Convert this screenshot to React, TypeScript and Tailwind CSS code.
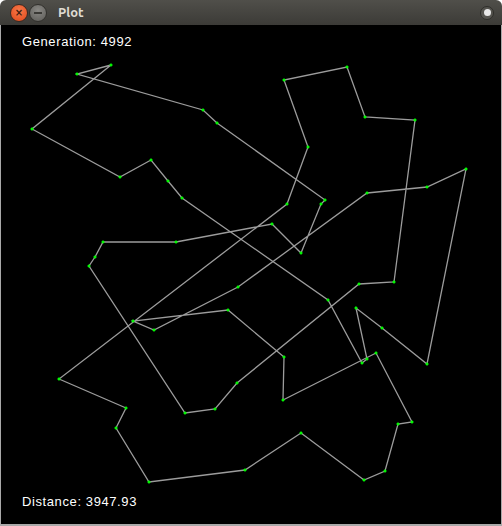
const tour: [number, number][] = [
  [59, 379], [126, 408], [116, 428], [149, 482], [245, 470], [301, 433],
  [364, 480], [385, 471], [398, 424], [412, 422], [376, 353], [283, 400],
  [284, 357], [228, 310], [133, 321], [154, 330], [238, 287], [367, 193],
  [427, 187], [466, 169], [427, 364], [382, 328], [356, 308], [367, 359],
  [362, 363], [328, 300], [182, 198], [168, 181], [151, 160], [120, 177],
  [32, 129], [111, 65], [77, 74], [203, 110], [217, 123], [325, 200],
  [321, 204], [301, 253], [272, 224], [176, 242], [103, 242], [95, 257],
  [89, 266], [185, 413], [215, 409], [237, 383], [359, 284], [394, 282],
  [415, 120], [365, 117], [347, 67], [284, 80], [308, 147], [287, 204],
];

const TitleBar = () => (
  <div className="h-[25px] flex items-center rounded-t-[6px] bg-gradient-to-b from-[#504f4a] to-[#3c3b37] px-[10px]">
    <div className="w-[18px] h-[18px] rounded-full bg-[radial-gradient(circle_at_50%_35%,#f7794a,#e0481a)] border border-[#3a2a22] flex items-center justify-center text-[10px] leading-none text-[#3b1d10] font-bold" style={{ fontFamily: "'DejaVu Sans', sans-serif" }}>
      ×
    </div>
    <div className="ml-[1px] w-[18px] h-[18px] rounded-full bg-[radial-gradient(circle_at_50%_35%,#8a8985,#5c5b57)] border border-[#32312d] flex items-center justify-center">
      <div className="w-[8px] h-[2px] bg-[#3a3935]" />
    </div>
    <span className="ml-[11px] text-[13px] font-bold text-[#dfdbd2]" style={{ fontFamily: "Ubuntu, 'DejaVu Sans', sans-serif" }}>
      Plot
    </span>
    <div className="ml-auto mr-[-2px] w-[14px] h-[14px] rounded-full bg-[#55544f] border border-[#2f2e2a] flex items-center justify-center">
      <div className="w-[7px] h-[7px] rounded-full bg-[#e8e8e8]" />
    </div>
  </div>
);

export default function App() {
  const pts = tour.map(([x, y]) => `${x},${y}`).join(" ");
  return (
    <div className="w-[502px] h-[526px] bg-white flex flex-col" style={{ fontFamily: "'Liberation Sans', Arial, sans-serif" }}>
      <TitleBar />
      <div className="relative flex-1 bg-black border-l border-r border-b-2 border-[#a9a9a9]">
        <svg className="absolute inset-0" width="500" height="499" viewBox="1 25 500 499">
          <polygon points={pts} fill="none" stroke="#9c9c9c" strokeWidth="1.3" />
          {tour.map(([x, y], i) => (
            <path key={i} d={`M${x - 1.5} ${y}h3M${x} ${y - 1.5}v3`} stroke="#00ff00" strokeWidth="1.5" />
          ))}
        </svg>
        <div className="absolute left-[21px] top-[7px] text-[13px] text-white tracking-[0.6px]">
          Generation: 4992
        </div>
        <div className="absolute left-[21px] top-[467px] text-[13px] text-white tracking-[0.6px]">
          Distance: 3947.93
        </div>
      </div>
    </div>
  );
}
